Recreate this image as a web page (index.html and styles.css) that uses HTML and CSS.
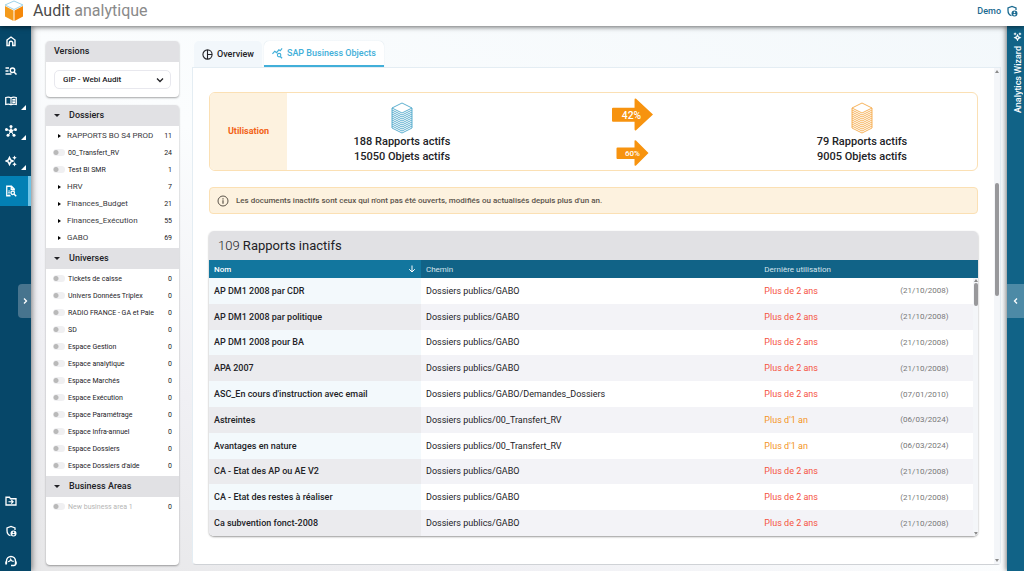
FILE: index.html
```html
<!DOCTYPE html>
<html lang="fr">
<head>
    <meta charset="UTF-8">
    <meta name="viewport" content="width=device-width, initial-scale=1.0">
    <title>Audit analytique</title>
    <link rel="stylesheet" href="styles.css">
</head>
<body>
    <svg class="sprite" aria-hidden="true">
        <symbol id="i-shield" viewBox="0 0 24 24">
            <path d="M20 10V6l-8-3-8 3v5c0 5 3 9 7 10.500" fill="none" stroke="currentColor" stroke-width="2.600"/>
            <path d="M17 11a6 6 0 1 0 0 12 6 6 0 0 0 0-12zm0 2.200a1.600 1.600 0 1 1 0 3.200 1.600 1.600 0 0 1 0-3.200zm0 7.800c-1.200 0-2.200-.6-2.900-1.500.1-1 1.900-1.500 2.900-1.500s2.800.5 2.900 1.500c-.7.9-1.700 1.500-2.900 1.500z" fill="currentColor"/>
        </symbol>
        <symbol id="i-sparkle" viewBox="0 0 24 24">
            <path d="M9 5l2.200 4.800L16 12l-4.800 2.200L9 19l-2.200-4.800L2 12l4.800-2.200z" fill="none" stroke="currentColor" stroke-width="3"/>
            <path d="M19 1l1.500 3L23.500 5.500 20.500 7 19 10l-1.500-3-3-1.500L17.500 4zM19 14l1.500 3 3 1.500-3 1.500L19 23l-1.500-3-3-1.500 3-1.500z" fill="currentColor"/>
        </symbol>
        <symbol id="i-stack" viewBox="0 0 22 32">
            <path d="M11 1L21 6 11 11 1 6z" fill="#fff"/>
            <path d="M11 1L21 6 11 11 1 6zM1 6v20l10 5 10-5V6M1 8l10 5 10-5M1 10l10 5 10-5M1 12l10 5 10-5M1 14l10 5 10-5M1 16l10 5 10-5M1 18l10 5 10-5M1 20l10 5 10-5M1 22l10 5 10-5M1 24l10 5 10-5" fill="none" stroke="currentColor" stroke-width=".9"/>
        </symbol>
    </svg>

    <header class="topbar">
        <svg class="logo" viewBox="0 0 20 22">
            <path d="M10 1L19 5 10 9.500 1 5z" fill="#fff" stroke="#9fd3ea" stroke-width="1"/>
            <path d="M1 6l8.500 4.500V21L1 16.500z" fill="#f39a1c"/>
            <path d="M19 6l-8.500 4.500V21L19 16.500z" fill="#f5880a"/>
        </svg>
        <h1><strong>Audit</strong> analytique</h1>
        <a class="user" href="#">Demo <svg><use href="#i-shield"/></svg></a>
    </header>

    <div class="layout">
        <nav class="rail">
            <button aria-label="Accueil"><svg viewBox="0 0 24 24"><path d="M4 10l8-6 8 6v11h-4.500v-5a3.500 3.500 0 0 0-7 0v5H4z" fill="none" stroke="currentColor" stroke-width="2.800"/></svg></button>
            <button aria-label="Recherche"><svg viewBox="0 0 24 24"><path d="M1 6h7M1 12h6M1 18h12" stroke="currentColor" stroke-width="2.600"/><circle cx="15" cy="10.500" r="4.500" fill="none" stroke="currentColor" stroke-width="2.800"/><path d="M18 14l5 5" stroke="currentColor" stroke-width="3"/></svg></button>
            <button class="plus" aria-label="Dictionnaire"><svg viewBox="0 0 24 24"><path d="M12 5.500C9 4 5 4 1.500 5v14c3.500-1 7.500-1 10.500.5 3-1.500 7-1.500 10.500-.5V5C19 4 15 4 12 5.500z" fill="none" stroke="currentColor" stroke-width="2.600"/><path d="M12 5.500v14M14.500 9.500c2-.8 4-.8 6-.5M14.500 12.500c2-.8 4-.8 6-.5M14.500 15.500c2-.8 4-.8 6-.5" fill="none" stroke="currentColor" stroke-width="2.200"/></svg></button>
            <button class="plus" aria-label="Réseau"><svg viewBox="0 0 24 24"><path d="M12 12V4M12 12L4 9M12 12l8-3M12 12l-5 8M12 12l5 8" stroke="currentColor" stroke-width="2"/><g fill="currentColor"><circle cx="12" cy="12" r="3.800"/><circle cx="12" cy="3" r="3"/><circle cx="3" cy="9" r="3"/><circle cx="21" cy="9" r="3"/><circle cx="6" cy="20.500" r="3"/><circle cx="18" cy="20.500" r="3"/></g></svg></button>
            <button class="plus" aria-label="Assistant"><svg><use href="#i-sparkle"/></svg></button>
            <button class="actif" aria-label="Audit"><svg viewBox="0 0 24 24"><path d="M11 21.500H3.500V2.500H13l5.500 5.500v3M12.500 3v5.500h5.500" fill="none" stroke="currentColor" stroke-width="2.600"/><path d="M6.500 12h4M6.500 15h3M6.500 18h3" stroke="currentColor" stroke-width="1.800"/><circle cx="15.500" cy="15.500" r="3.500" fill="none" stroke="currentColor" stroke-width="2.600"/><path d="M18 18l4.500 4.500" stroke="currentColor" stroke-width="3"/></svg></button>
            <div class="rail-bas">
                <button aria-label="Ajouter un dossier"><svg viewBox="0 0 24 24"><path d="M2 4.500h7l2 3h11V20H2z" fill="none" stroke="currentColor" stroke-width="2.600"/><path d="M7 13.500h9M12.500 9.800l3.700 3.700-3.700 3.700" fill="none" stroke="currentColor" stroke-width="2.400"/></svg></button>
                <button aria-label="Administration"><svg><use href="#i-shield"/></svg></button>
                <button aria-label="Support"><svg viewBox="0 0 24 24"><path d="M3 17v-5a9 9 0 0 1 18 0v6c0 2-1 3-3 3h-6" fill="none" stroke="currentColor" stroke-width="2.800"/><path d="M6 13.500c3.500-.5 5-2.500 5.500-4.500 1 2.500 3 3.800 6 3.800" fill="none" stroke="currentColor" stroke-width="2.400"/><path d="M.5 13h3.500v6H.5zM20 13h3.500v6H20z" fill="currentColor"/></svg></button>
            </div>
            <button class="poignee poignee-gauche" aria-label="Ouvrir le menu"><svg viewBox="0 0 8 8"><path d="M3 1.500L5.500 4 3 6.500" fill="none" stroke="currentColor" stroke-width="1.300"/></svg></button>
        </nav>

        <aside class="filtres">
            <section class="carte versions">
                <h2><label for="version">Versions</label></h2>
                <div class="choix">
                    <select id="version">
                        <option>GIP - Webi Audit</option>
                    </select>
                    <svg viewBox="0 0 8 8"><path d="M1 2.500L4 5.500 7 2.500" fill="none" stroke="currentColor" stroke-width="1.300"/></svg>
                </div>
            </section>

            <section class="carte arbre">
                <h2><button>Dossiers</button></h2>
                <ul>
                    <li><button>RAPPORTS BO S4 PROD</button><span>11</span></li>
                    <li><label><input type="checkbox">00_Transfert_RV</label><span>24</span></li>
                    <li><label><input type="checkbox">Test BI SMR</label><span>1</span></li>
                    <li><button>HRV</button><span>7</span></li>
                    <li><button>Finances_Budget</button><span>21</span></li>
                    <li><button>Finances_Exécution</button><span>55</span></li>
                    <li><button>GABO</button><span>69</span></li>
                </ul>
                <h2><button>Universes</button></h2>
                <ul>
                    <li><label><input type="checkbox">Tickets de caisse</label><span>0</span></li>
                    <li><label><input type="checkbox">Univers Données Triplex</label><span>0</span></li>
                    <li><label><input type="checkbox">RADIO FRANCE - GA et Paie</label><span>0</span></li>
                    <li><label><input type="checkbox">SD</label><span>0</span></li>
                    <li><label><input type="checkbox">Espace Gestion</label><span>0</span></li>
                    <li><label><input type="checkbox">Espace analytique</label><span>0</span></li>
                    <li><label><input type="checkbox">Espace Marchés</label><span>0</span></li>
                    <li><label><input type="checkbox">Espace Exécution</label><span>0</span></li>
                    <li><label><input type="checkbox">Espace Paramétrage</label><span>0</span></li>
                    <li><label><input type="checkbox">Espace Infra-annuel</label><span>0</span></li>
                    <li><label><input type="checkbox">Espace Dossiers</label><span>0</span></li>
                    <li><label><input type="checkbox">Espace Dossiers d'aide</label><span>0</span></li>
                </ul>
                <h2><button>Business Areas</button></h2>
                <ul>
                    <li class="inactif"><label><input type="checkbox" disabled>New business area 1</label><span>0</span></li>
                </ul>
            </section>
        </aside>

        <main>
            <div class="onglets">
                <button><svg viewBox="0 0 24 24"><circle cx="12" cy="12" r="10" fill="none" stroke="currentColor" stroke-width="2.400"/><path d="M12 2v20M12 12h10" stroke="currentColor" stroke-width="2.400"/></svg>Overview</button>
                <button class="actif"><svg viewBox="0 0 24 24"><path d="M1 13l5-6 4 3 5-6 3 2 4-5" fill="none" stroke="currentColor" stroke-width="2.600"/><circle cx="15.500" cy="15.500" r="3.800" fill="none" stroke="currentColor" stroke-width="2.400"/><path d="M18 18.500l4 4" stroke="currentColor" stroke-width="2.800"/></svg>SAP Business Objects</button>
            </div>

            <div class="page">
                <div class="contenu">
                    <section class="utilisation">
                        <h3>Utilisation</h3>
                        <div class="stat bleu">
                            <svg><use href="#i-stack"/></svg>
                            <p>188 Rapports actifs</p>
                            <p>15050 Objets actifs</p>
                        </div>
                        <div class="fleches">
                            <svg viewBox="0 0 40 32"><path d="M1 9.500h21V1.500q0-1.500 1.500-.8L40 16 23.500 31.300q-1.500.7-1.500-.8V23H1q-1 0-1-1V10.500q0-1 1-1z" fill="#f7930f"/><text x="19" y="20">42%</text></svg>
                            <svg class="petite" viewBox="0 0 32 26"><path d="M1 7.500h17V1.200q0-1.500 1.500-.6L32 13 19.500 25.400q-1.500.9-1.500-.6V19H1q-1 0-1-1V8.500q0-1 1-1z" fill="#f7930f"/><text x="16" y="16">60%</text></svg>
                        </div>
                        <div class="stat orange">
                            <svg><use href="#i-stack"/></svg>
                            <p>79 Rapports actifs</p>
                            <p>9005 Objets actifs</p>
                        </div>
                    </section>

                    <p class="info">
                        <svg viewBox="0 0 12 12"><circle cx="6" cy="6" r="5" fill="none" stroke="currentColor" stroke-width="1"/><path d="M6 5.200v3.500M6 3.200v1.200" stroke="currentColor" stroke-width="1.200"/></svg>
                        Les documents inactifs sont ceux qui n'ont pas été ouverts, modifiés ou actualisés depuis plus d'un an.
                    </p>

                    <section class="rapports">
                        <h3><span>109</span> Rapports inactifs</h3>
                        <div class="liste">
                            <table>
                                <thead>
                                    <tr>
                                        <th class="nom">Nom <svg viewBox="0 0 8 8"><path d="M4 .5v6.500M1.200 4.200L4 7l2.800-2.800" fill="none" stroke="currentColor"/></svg></th>
                                        <th class="chemin">Chemin</th>
                                        <th class="usage">Dernière utilisation</th>
                                        <th></th>
                                    </tr>
                                </thead>
                                <tbody>
                                    <tr><td>AP DM1 2008 par CDR</td><td>Dossiers publics/GABO</td><td class="vieux">Plus de 2 ans</td><td>(21/10/2008)</td></tr>
                                    <tr><td>AP DM1 2008 par politique</td><td>Dossiers publics/GABO</td><td class="vieux">Plus de 2 ans</td><td>(21/10/2008)</td></tr>
                                    <tr><td>AP DM1 2008 pour BA</td><td>Dossiers publics/GABO</td><td class="vieux">Plus de 2 ans</td><td>(21/10/2008)</td></tr>
                                    <tr><td>APA 2007</td><td>Dossiers publics/GABO</td><td class="vieux">Plus de 2 ans</td><td>(21/10/2008)</td></tr>
                                    <tr><td>ASC_En cours d'instruction avec email</td><td>Dossiers publics/GABO/Demandes_Dossiers</td><td class="vieux">Plus de 2 ans</td><td>(07/01/2010)</td></tr>
                                    <tr><td>Astreintes</td><td>Dossiers publics/00_Transfert_RV</td><td class="moyen">Plus d'1 an</td><td>(06/03/2024)</td></tr>
                                    <tr><td>Avantages en nature</td><td>Dossiers publics/00_Transfert_RV</td><td class="moyen">Plus d'1 an</td><td>(06/03/2024)</td></tr>
                                    <tr><td>CA - Etat des AP ou AE V2</td><td>Dossiers publics/GABO</td><td class="vieux">Plus de 2 ans</td><td>(21/10/2008)</td></tr>
                                    <tr><td>CA - Etat des restes à réaliser</td><td>Dossiers publics/GABO</td><td class="vieux">Plus de 2 ans</td><td>(21/10/2008)</td></tr>
                                    <tr><td>Ca subvention fonct-2008</td><td>Dossiers publics/GABO</td><td class="vieux">Plus de 2 ans</td><td>(21/10/2008)</td></tr>
                                </tbody>
                            </table>
                            <div class="defil defil-liste"><i></i></div>
                        </div>
                    </section>
                </div>
                <div class="defil defil-page"><i></i></div>
            </div>
        </main>

        <aside class="assistant">
            <svg><use href="#i-sparkle"/></svg>
            <span>Analytics Wizard</span>
            <button class="poignee poignee-droite" aria-label="Ouvrir l'assistant"><svg viewBox="0 0 8 8"><path d="M5 1.500L2.500 4 5 6.500" fill="none" stroke="currentColor" stroke-width="1.300"/></svg></button>
        </aside>
    </div>
</body>
</html>
```
FILE: styles.css
```css
* {
    box-sizing: border-box;
}
body {
    margin: 0;
    height: 100vh;
    display: flex;
    flex-direction: column;
    overflow: hidden;
    font-family: Roboto, sans-serif;
    font-size: 9px;
    color: #222226;
}
h1, h2, h3, p, ul {
    margin: 0;
    padding: 0;
    list-style: none;
}
button, select, input {
    font: inherit;
    color: inherit;
    border: none;
    background: none;
    padding: 0;
    margin: 0;
}
button {
    cursor: pointer;
}
.sprite {
    position: absolute;
    width: 0;
    height: 0;
}

/* Barre du haut */
.topbar {
    display: flex;
    align-items: center;
    height: 26px;
    flex-shrink: 0;
    padding: 0 6px 5px 4px;
    background: #fff;
    box-shadow: 0 1px 5px rgba(0, 0, 0, 0.6);
    z-index: 2;
}
.logo {
    width: 20px;
    height: 22px;
}
.topbar h1 {
    margin-left: 9px;
    font-size: 16px;
    font-weight: 400;
    color: #8a8a8a;
}
.topbar h1 strong {
    font-weight: 400;
    color: #4b4b4b;
}
.user {
    display: flex;
    align-items: center;
    gap: 5px;
    margin-left: auto;
    font-weight: 500;
    color: #1b6a90;
    text-decoration: none;
}
.user svg {
    width: 12px;
    height: 12px;
}

.layout {
    display: flex;
    flex: 1;
    min-height: 0;
    background: linear-gradient(to top right, #e6e6e7, #f0f0f4 25%, #fbfdfe 50%, #f3f8fb);
}

/* Menu latéral */
.rail {
    position: relative;
    display: flex;
    flex-direction: column;
    width: 31px;
    flex-shrink: 0;
    background: #064769;
    color: #fff;
    box-shadow: 1px 0 6px rgba(0, 0, 0, 0.5);
}
.rail > button, .rail-bas button {
    position: relative;
    display: flex;
    align-items: center;
    width: 100%;
    height: 30px;
    padding-left: 5px;
}
.rail svg {
    width: 12px;
    height: 12px;
}
.rail .actif {
    background: #0380b4;
    border-right: 3px solid #6fc4e6;
}
.rail .plus::after {
    content: "";
    position: absolute;
    right: 5px;
    bottom: 6px;
    border-left: 5px solid transparent;
    border-bottom: 5px solid #fff;
}
.rail-bas {
    margin-top: auto;
    margin-bottom: -5px;
}
.rail .poignee, .poignee {
    position: absolute;
    display: flex;
    align-items: center;
    justify-content: center;
    height: 34px;
    padding: 0;
    color: #fff;
    background: #47748e;
}
.rail .poignee-gauche {
    top: 258px;
    right: 0;
    width: 13px;
    border-radius: 4px 0 0 4px;
}
.rail .poignee svg, .poignee svg {
    width: 8px;
    height: 8px;
}

/* Filtres */
.filtres {
    display: flex;
    flex-direction: column;
    gap: 8px;
    width: 133px;
    flex-shrink: 0;
    margin: 15px 13px 6px 15px;
}
.carte {
    background: #fff;
    border-radius: 4px;
    box-shadow: 0 1px 2px rgba(0, 0, 0, 0.35);
    overflow: hidden;
}
.carte h2 {
    height: 21px;
    line-height: 21px;
    font-size: 9px;
    font-weight: 500;
    background: #e1e1e4;
}
.versions h2 {
    padding-left: 8px;
}
.choix {
    position: relative;
    margin: 8px;
}
.choix select {
    width: 100%;
    height: 19px;
    padding-left: 8px;
    border: 1px solid #e8e8ee;
    border-radius: 5px;
    font-size: 8px;
    font-weight: 500;
    appearance: none;
}
.choix svg {
    position: absolute;
    top: 6px;
    right: 7px;
    width: 8px;
    height: 8px;
    pointer-events: none;
}
.arbre {
    flex: 1;
}
.arbre h2 button {
    display: flex;
    align-items: center;
    gap: 9px;
    width: 100%;
    height: 21px;
    padding-left: 8px;
}
.arbre h2 button::before {
    content: "";
    border: 3px solid transparent;
    border-top-color: #222226;
    border-bottom: none;
}
.arbre ul {
    padding: 1px 7px 2px;
}
.arbre li {
    display: flex;
    align-items: center;
    justify-content: space-between;
    height: 17px;
    font-size: 7px;
}
.arbre li button {
    display: flex;
    align-items: center;
    gap: 6px;
    padding-left: 5px;
    font-size: 8px;
    color: #3a3a3e;
}
.arbre li button::before {
    content: "";
    border: 2px solid transparent;
    border-left: 3px solid #000;
    border-right: none;
}
.arbre label {
    display: flex;
    align-items: center;
    gap: 3px;
}
.arbre input {
    width: 12px;
    height: 7px;
    border-radius: 4px;
    background: radial-gradient(circle at 3px 50%, #b9b9b9 2px, transparent 3px) #f0f0f2;
    appearance: none;
}
.arbre .inactif label {
    color: #b5b5b5;
}

/* Contenu principal */
main {
    display: flex;
    flex-direction: column;
    flex: 1;
    min-width: 0;
    margin: 15px 6px 6px 0;
}
.onglets {
    display: flex;
    gap: 2px;
    padding-left: 2px;
}
.onglets button {
    display: flex;
    align-items: center;
    gap: 4px;
    height: 26px;
    padding: 0 8px;
    border-radius: 5px 5px 0 0;
    background: #f2f7fb;
    font-weight: 500;
}
.onglets svg {
    width: 11px;
    height: 11px;
}
.onglets .actif {
    background: #fff;
    color: #42afd9;
    border-bottom: 2px solid #42afd9;
    box-shadow: 0 0 1px #c5d8e2;
}
.page {
    display: flex;
    flex: 1;
    min-height: 0;
    background: #fff;
    border: 1px solid #e4edf3;
    border-bottom-color: #cfd2d6;
    border-radius: 0 0 4px 4px;
}
.contenu {
    display: flex;
    flex-direction: column;
    flex: 1;
    gap: 16px;
    padding: 24px 16px 28px;
}
.utilisation {
    display: flex;
    height: 79px;
    border: 1px solid #fbe0b4;
    border-radius: 6px;
    overflow: hidden;
}
.utilisation h3 {
    width: 77px;
    line-height: 77px;
    text-align: center;
    font-size: 9px;
    font-weight: 700;
    color: #f26216;
    background: #fdf2df;
}
.stat, .fleches {
    display: flex;
    flex-direction: column;
    align-items: center;
    flex: 1;
    padding-top: 9px;
}
.stat svg {
    width: 22px;
    height: 32px;
}
.stat p {
    line-height: 15px;
    font-size: 11px;
    font-weight: 500;
}
.bleu svg {
    color: #4ba6ca;
}
.orange svg {
    color: #f5a94a;
}
.fleches {
    gap: 9px;
    padding-top: 5px;
}
.fleches svg {
    width: 41px;
    height: 33px;
}
.fleches .petite {
    width: 33px;
    height: 26px;
}
.fleches text {
    fill: #fff;
    font-size: 10px;
    font-weight: 500;
    text-anchor: middle;
}
.fleches .petite text {
    font-size: 8px;
}
.info {
    display: flex;
    align-items: center;
    gap: 7px;
    height: 27px;
    padding-left: 7px;
    border: 1px solid #fbe0b4;
    border-radius: 4px;
    background: #fdf2df;
    font-size: 8px;
    font-weight: 500;
    color: #5b544b;
}
.info svg {
    width: 12px;
    height: 12px;
}

/* Tableau des rapports */
.rapports {
    display: flex;
    flex-direction: column;
    flex: 1;
    margin-top: 1px;
    border-radius: 5px;
    box-shadow: 0 1px 2px rgba(0, 0, 0, 0.4);
    overflow: hidden;
}
.rapports h3 {
    padding-left: 9px;
    line-height: 29px;
    font-size: 13px;
    font-weight: 400;
    background: #e1e1e4;
}
.rapports h3 span {
    font-weight: 300;
}
.liste {
    position: relative;
    flex: 1;
}
table {
    width: 100%;
    height: 100%;
    table-layout: fixed;
    border-spacing: 0;
}
th, td {
    padding: 0 5px;
    text-align: left;
}
th {
    height: 18px;
    font-size: 8px;
    font-weight: 400;
    color: #d5e4ec;
    background: #116387;
}
.nom {
    width: 212px;
    font-weight: 500;
    color: #fff;
    background: #12769e;
}
.nom svg {
    float: right;
    width: 8px;
    height: 8px;
}
.chemin {
    width: 44%;
}
.usage {
    width: 136px;
}
tbody tr:nth-child(even) {
    background: #f3f3f7;
}
td:first-child {
    font-weight: 500;
    background: #f3f9fc;
}
tr:nth-child(even) td:first-child {
    background: #ebebee;
}
td:last-child {
    color: #777;
    font-size: 8px;
    border-right: 5px solid #f3f3f7;
}
.vieux {
    color: #f5533f;
}
.moyen {
    color: #f39325;
}

/* Barres de défilement */
.defil {
    display: flex;
    flex-direction: column;
    justify-content: space-between;
    align-items: center;
    width: 6px;
    background: #f4f6f9;
}
.defil::before, .defil::after {
    content: "";
    margin: 2px 0;
    border: 2px solid transparent;
}
.defil::before {
    border-top: none;
    border-bottom: 3px solid #8b8b8b;
}
.defil::after {
    border-bottom: none;
    border-top: 3px solid #8b8b8b;
}
.defil i {
    width: 4px;
    border-radius: 2px;
    background: #98989b;
}
.defil-page i {
    height: 113px;
    margin-bottom: 154px;
}
.defil-liste {
    position: absolute;
    top: 18px;
    right: 0;
    bottom: 0;
    width: 5px;
}
.defil-liste::before, .defil-liste::after {
    margin: 1px 0;
}
.defil-liste i {
    height: 23px;
    margin-bottom: auto;
}

/* Assistant */
.assistant {
    position: relative;
    display: flex;
    flex-direction: column;
    align-items: center;
    gap: 5px;
    width: 17px;
    flex-shrink: 0;
    padding: 6px 0 0 4px;
    background: #116387;
    color: #fff;
    box-shadow: -1px 0 5px rgba(0, 0, 0, 0.5);
}
.assistant > svg {
    width: 9px;
    height: 9px;
    transform: rotate(-90deg);
}
.assistant span {
    writing-mode: vertical-rl;
    transform: rotate(180deg);
    font-weight: 500;
}
.poignee-droite {
    top: 258px;
    right: 0;
    width: 17px;
    background: #4d8aa6;
}
```
